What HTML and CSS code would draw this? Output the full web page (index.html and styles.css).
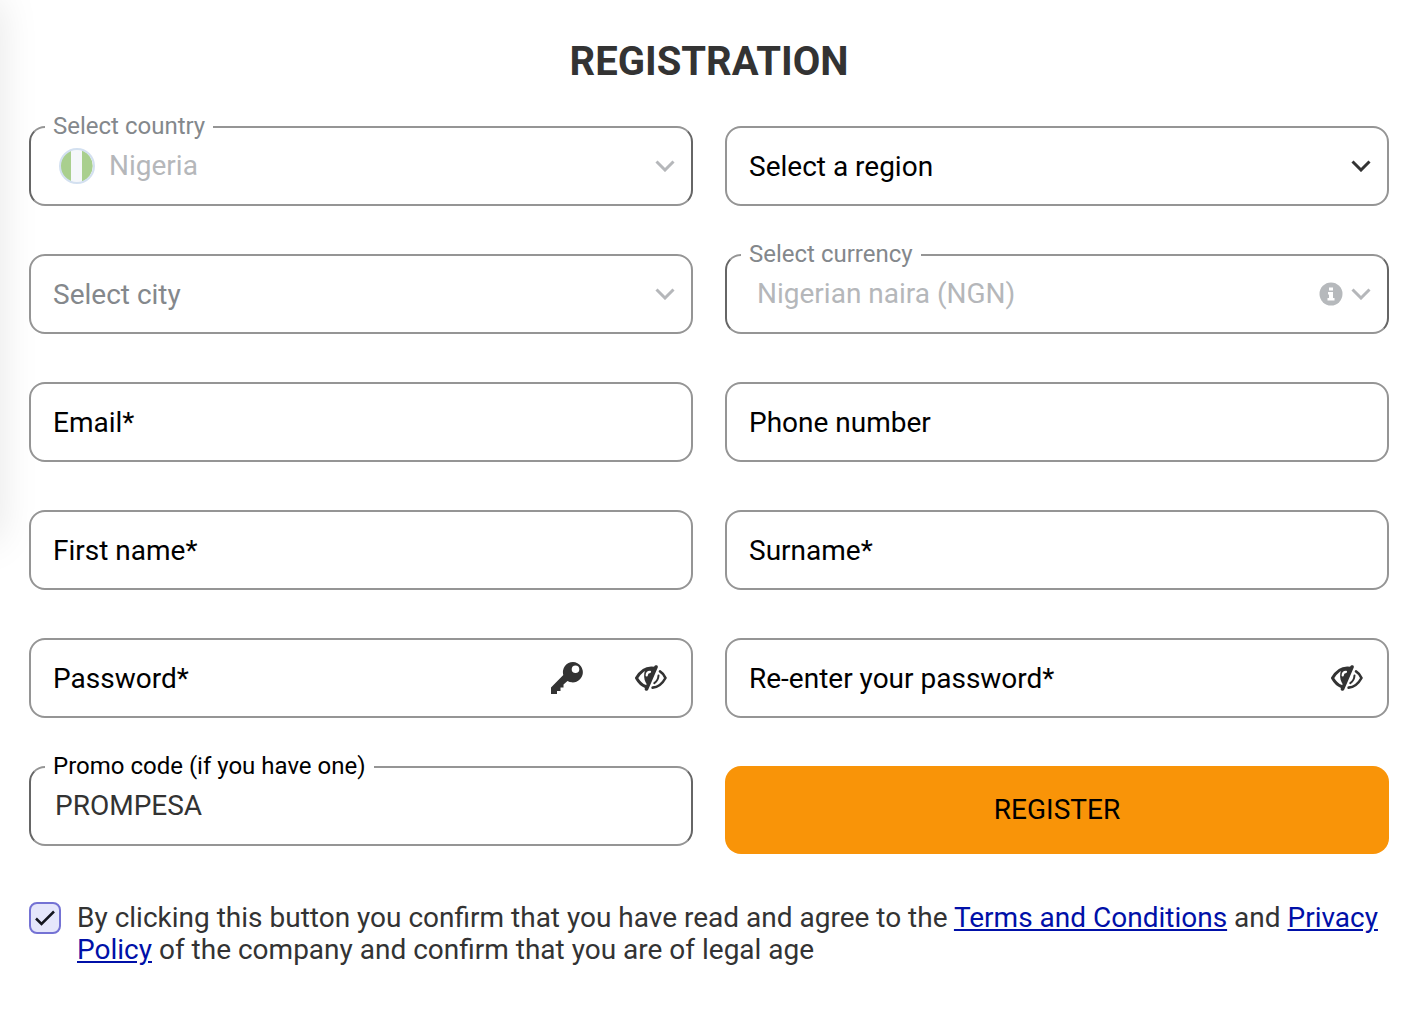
FILE: index.html
```html
<!DOCTYPE html>
<html lang="en">
<head>
<meta charset="utf-8">
<meta name="viewport" content="width=device-width, initial-scale=1">
<title>Registration</title>
<link rel="stylesheet" href="styles.css">
</head>
<body>
<svg class="sprite" aria-hidden="true">
  <symbol id="chevron" viewBox="0 0 20 12"><path d="M1.500 1.500 10 10 18.500 1.500" fill="none" stroke="currentColor" stroke-width="3"/></symbol>
  <symbol id="eye" viewBox="0 0 32 26">
    <path d="M19.500 3.200C11 1.600 5 7 1.500 13 4 17.500 6.500 20 10.500 21.500" fill="none" stroke="currentColor" stroke-width="3" stroke-linecap="round" stroke-linejoin="round"/>
    <path d="M10.500 4.500C8 9.500 9 16.500 12.500 20L19.500 4.200C16.500 2.700 12.500 3 10.500 4.500Z" fill="currentColor"/>
    <path d="M11.700 10.500C11.700 8.500 13 7 15 6.900" fill="none" stroke="#fff" stroke-width="2.200" stroke-linecap="round"/>
    <path d="M21 2 11.500 24" stroke="currentColor" stroke-width="3.600" stroke-linecap="round"/>
    <path d="M25 6.300C27.800 8 29.500 10.200 30.500 13 27.500 18.500 23 22.300 17.600 22.600" fill="none" stroke="currentColor" stroke-width="2.600" stroke-linecap="round" stroke-linejoin="round"/>
    <path d="M23.500 10.500C23.300 14 21.800 16.500 19.300 18.200" fill="none" stroke="currentColor" stroke-width="2" stroke-linecap="round"/>
  </symbol>
</svg>
<main class="page">
  <form class="registration">
    <h1 class="title">REGISTRATION</h1>
    <div class="fields">
      <div class="field field--filled field--disabled">
        <select class="control control--flag" id="country" disabled><option>Nigeria</option></select>
        <label class="label" for="country">Select country</label>
        <svg class="flag" viewBox="0 0 36 36" aria-hidden="true">
          <circle cx="18" cy="18" r="17" fill="#f5f7fa"/>
          <path d="M12 2.200A17 17 0 0 0 12 33.800ZM23 2.200A17 17 0 0 1 23 33.800Z" fill="#a9cf8e"/>
          <circle cx="18" cy="18" r="17" fill="none" stroke="#d3e0f0" stroke-width="2"/>
        </svg>
        <span class="icons"><svg class="chevron" aria-hidden="true"><use href="#chevron"/></svg></span>
      </div>
      <div class="field">
        <select class="control" id="region"><option value=""></option></select>
        <label class="label" for="region">Select a region</label>
        <span class="icons"><svg class="chevron" aria-hidden="true"><use href="#chevron"/></svg></span>
      </div>
      <div class="field field--disabled">
        <select class="control" id="city" disabled><option value=""></option></select>
        <label class="label" for="city">Select city</label>
        <span class="icons"><svg class="chevron" aria-hidden="true"><use href="#chevron"/></svg></span>
      </div>
      <div class="field field--filled field--disabled">
        <select class="control control--currency" id="currency" disabled><option>Nigerian naira (NGN)</option></select>
        <label class="label" for="currency">Select currency</label>
        <span class="icons">
          <svg class="info" viewBox="0 0 24 24" aria-hidden="true"><circle cx="12" cy="12" r="11.500" fill="#b6b9bc"/><path d="M10 5.500h4v3h-4zM9 10h5v6h1.500v2.500h-7V16H10v-3.500H9z" fill="#fff"/></svg>
          <svg class="chevron" aria-hidden="true"><use href="#chevron"/></svg>
        </span>
      </div>
      <div class="field">
        <input class="control" id="email" type="email">
        <label class="label" for="email">Email*</label>
      </div>
      <div class="field">
        <input class="control" id="phone" type="tel">
        <label class="label" for="phone">Phone number</label>
      </div>
      <div class="field">
        <input class="control" id="first-name" type="text">
        <label class="label" for="first-name">First name*</label>
      </div>
      <div class="field">
        <input class="control" id="surname" type="text">
        <label class="label" for="surname">Surname*</label>
      </div>
      <div class="field">
        <input class="control" id="password" type="password">
        <label class="label" for="password">Password*</label>
        <span class="icons icons--actions">
          <button class="icon-button" type="button" aria-label="Generate password"><svg class="key" viewBox="0 0 32 32" aria-hidden="true"><path fill="currentColor" fill-rule="evenodd" d="M22 0A10.200 10.200 0 0 0 12.300 13L0 25.500V32H6V29H9.500V25.500H12.500V22.500L16.500 19A10.200 10.200 0 1 0 22 0ZM24.500 3.500A3.800 3.800 0 1 1 24.500 11.100 3.800 3.800 0 0 1 24.500 3.500Z"/></svg></button>
          <button class="icon-button" type="button" aria-label="Show password"><svg class="eye" aria-hidden="true"><use href="#eye"/></svg></button>
        </span>
      </div>
      <div class="field">
        <input class="control" id="password-repeat" type="password">
        <label class="label" for="password-repeat">Re-enter your password*</label>
        <span class="icons icons--actions">
          <button class="icon-button" type="button" aria-label="Show password"><svg class="eye" aria-hidden="true"><use href="#eye"/></svg></button>
        </span>
      </div>
      <div class="field field--filled">
        <input class="control" id="promo" type="text" value="PROMPESA">
        <label class="label" for="promo">Promo code (if you have one)</label>
      </div>
      <button class="submit" type="submit">REGISTER</button>
    </div>
    <div class="consent">
      <span class="tick">
        <input class="tick__box" id="consent" type="checkbox" checked>
        <svg class="tick__mark" viewBox="0 0 20 16" aria-hidden="true"><path d="M1 8.500 6.500 14 19 1.500" fill="none" stroke="#14151f" stroke-width="2.500"/></svg>
      </span>
      <label class="consent__text" for="consent">By clicking this button you confirm that you have read and agree to the <a href="#terms">Terms and Conditions</a> and <a href="#privacy">Privacy Policy</a> of the company and confirm that you are of legal age</label>
    </div>
  </form>
</main>
</body>
</html>
```
FILE: styles.css
```css
*, *::before { box-sizing: border-box; }

body {
  margin: 0;
  background: #fff;
  color: #333;
  font: 28px/32px Roboto, "Liberation Sans", sans-serif;
}

/* shadow cast by the panel beyond the left edge */
body::before {
  content: "";
  position: absolute;
  left: -40px;
  top: 0;
  width: 40px;
  height: 540px;
  box-shadow: 0 0 40px rgba(0, 0, 0, .1);
}

.sprite { position: absolute; width: 0; height: 0; }

.page { padding: 36px 31px 52px 29px; }

.title {
  margin: 0 0 38px;
  font-size: 40px;
  line-height: 52px;
  font-weight: 700;
  text-align: center;
}

.fields {
  display: grid;
  grid-template-columns: 1fr 1fr;
  align-items: start;
  gap: 48px 32px;
}

.field { position: relative; color: #000; }
.field--disabled { color: #84888c; }

.control {
  display: block;
  appearance: none;
  width: 100%;
  height: 80px;
  margin: 0;
  padding: 0 24px;
  border: 2px solid #959595;
  border-radius: 16px;
  background: #fff;
  color: #333;
  font: inherit;
  opacity: 1;
}
.control:disabled { color: #b5b7ba; }
.field--filled .control { border-color: #959595 #666; }
.field--filled input.control { padding-bottom: 2px; }
.field--filled .control--flag { padding-left: 78px; }
.field--filled .control--currency { padding-left: 30px; }

.label {
  position: absolute;
  left: 24px;
  top: 25px;
  pointer-events: none;
}
.field--filled .label {
  left: 16px;
  top: -16px;
  padding: 0 8px;
  background: #fff;
  font-size: 24px;
}

.flag { position: absolute; left: 30px; top: 22px; width: 36px; height: 36px; }

.icons {
  position: absolute;
  right: 18px;
  top: 0;
  height: 80px;
  display: flex;
  align-items: center;
  gap: 8px;
  color: #333;
  pointer-events: none;
}
.icons--actions { right: 26px; gap: 52px; pointer-events: auto; }
.field--disabled .icons { color: #b5b7ba; }

.chevron { width: 20px; height: 12px; }
.info { width: 24px; height: 24px; }
.key { width: 32px; height: 32px; }
.eye { width: 32px; height: 26px; }

.icon-button {
  display: flex;
  padding: 0;
  border: 0;
  background: none;
  color: #333;
  cursor: pointer;
}

.submit {
  height: 88px;
  padding: 0;
  border: 0;
  border-radius: 16px;
  background: #f99408;
  color: #000;
  font: inherit;
  cursor: pointer;
}

.consent { display: flex; gap: 16px; margin-top: 48px; }

.tick { position: relative; flex: none; width: 32px; height: 32px; }
.tick__box {
  display: block;
  appearance: none;
  width: 32px;
  height: 32px;
  margin: 0;
  border: 2px solid #7472d4;
  border-radius: 8px;
  background: #e5e6fb;
}
.tick__mark { position: absolute; left: 6px; top: 8px; width: 20px; height: 16px; pointer-events: none; }

.consent__text a { color: #0010a8; text-decoration: underline; }
```
